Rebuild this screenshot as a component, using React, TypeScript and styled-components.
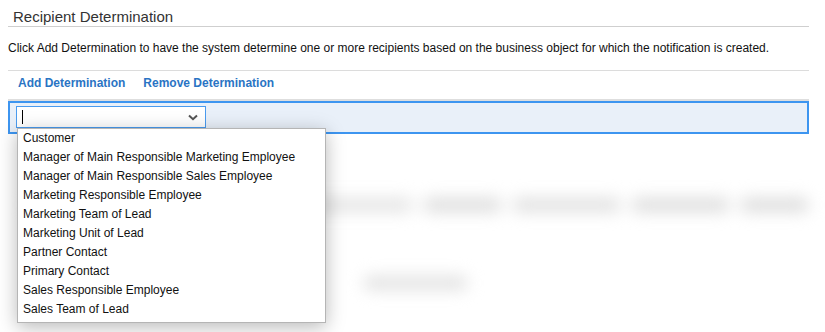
import React from "react";
import styled, { createGlobalStyle } from "styled-components";

const GlobalStyle = createGlobalStyle`
  body {
    margin: 0;
    background: #fff;
    font-family: "Liberation Sans", Arial, sans-serif;
  }
`;

const Page = styled.div`
  position: relative;
  width: 825px;
  height: 332px;
  overflow: hidden;
  padding: 0 16px 0 8px;
  box-sizing: border-box;
`;

const Title = styled.h2`
  margin: 0;
  height: 27px;
  padding: 8px 0 0 5px;
  box-sizing: border-box;
  border-bottom: 1px solid #cfcfcf;
  font-size: 15px;
  font-weight: normal;
  color: #333;
  line-height: 18px;
`;

const Description = styled.p`
  margin: 0;
  height: 44px;
  box-sizing: border-box;
  line-height: 43px;
  border-bottom: 1px solid #dcdcdc;
  font-size: 12px;
  color: #111;
`;

const Toolbar = styled.div`
  display: flex;
  gap: 18px;
  height: 28px;
  box-sizing: border-box;
  align-items: center;
  padding: 0 10px 5px;
`;

const ToolLink = styled.a`
  font-size: 12px;
  font-weight: bold;
  color: #2a74c4;
  text-decoration: none;
  cursor: pointer;
`;

const Row = styled.div`
  border-top: 2px solid #dedede;
  height: 35px;
  box-sizing: border-box;
  display: flex;
  flex-direction: column;
`;

const EditRow = styled.div`
  flex: 1;
  background: #e9f0f9;
  border: 2px solid #3d95f0;
  padding: 3px 6px;
`;

const Combo = styled.div`
  position: relative;
  width: 190px;
  height: 22px;
  box-sizing: border-box;
  background: #fff;
  border: 1px solid #4a9bef;
  display: flex;
  align-items: center;
  justify-content: space-between;
  padding: 0 7px 0 5px;
`;

const Caret = styled.span`
  width: 1px;
  height: 14px;
  background: #000;
`;

const Dropdown = styled.ul`
  position: absolute;
  top: 21px;
  left: 0;
  width: 307px;
  margin: 0;
  padding: 0 0 3px;
  list-style: none;
  background: #fff;
  border: 1px solid #b5b5b5;
  box-shadow: 0 4px 18px rgba(0, 0, 0, 0.28);
  z-index: 2;
`;

const Option = styled.li`
  height: 19px;
  line-height: 19px;
  padding-left: 5px;
  font-size: 12px;
  color: #111;
  white-space: nowrap;
`;

const Backdrop = styled.div`
  filter: blur(8px);
  padding: 64px 0 0 0;
  display: flex;
  flex-direction: column;
  gap: 64px;
`;

const BlurBand = styled.div`
  display: flex;
  gap: 10px;
  height: 14px;
`;

const Smudge = styled.span<{ w: number; shade?: string; left?: number }>`
  width: ${(p) => p.w}px;
  margin-left: ${(p) => p.left ?? 0}px;
  height: 100%;
  background: ${(p) => p.shade ?? "#d8d8d8"};
  border-radius: 7px;
`;

const options = [
  "Customer",
  "Manager of Main Responsible Marketing Employee",
  "Manager of Main Responsible Sales Employee",
  "Marketing Responsible Employee",
  "Marketing Team of Lead",
  "Marketing Unit of Lead",
  "Partner Contact",
  "Primary Contact",
  "Sales Responsible Employee",
  "Sales Team of Lead",
];

const Chevron = () => (
  <svg width="10" height="7" viewBox="0 0 10 7">
    <path d="M1 1.5 L5 5.2 L9 1.5" fill="none" stroke="#555" strokeWidth="2" />
  </svg>
);

const App = () => {
  return (
    <>
      <GlobalStyle />
      <Page>
        <Title>Recipient Determination</Title>
        <Description>
          Click Add Determination to have the system determine one or more
          recipients based on the business object for which the notification
          is created.
        </Description>
        <Toolbar>
          <ToolLink>Add Determination</ToolLink>
          <ToolLink>Remove Determination</ToolLink>
        </Toolbar>
        <Row>
          <EditRow>
            <Combo>
              <Caret />
              <Chevron />
              <Dropdown>
                {options.map((o) => (
                  <Option key={o}>{o}</Option>
                ))}
              </Dropdown>
            </Combo>
          </EditRow>
        </Row>
        <Backdrop>
          <BlurBand>
            <Smudge w={100} left={20} shade="#e4e4e4" />
            <Smudge w={280} shade="#e4e4e4" />
            <Smudge w={80} shade="#dddddd" />
            <Smudge w={110} shade="#e0e0e0" />
            <Smudge w={100} shade="#dddddd" />
            <Smudge w={70} shade="#dcdcdc" />
          </BlurBand>
          <BlurBand>
            <Smudge w={105} left={355} shade="#e2e2e2" />
          </BlurBand>
        </Backdrop>
      </Page>
    </>
  );
};

export default App;
